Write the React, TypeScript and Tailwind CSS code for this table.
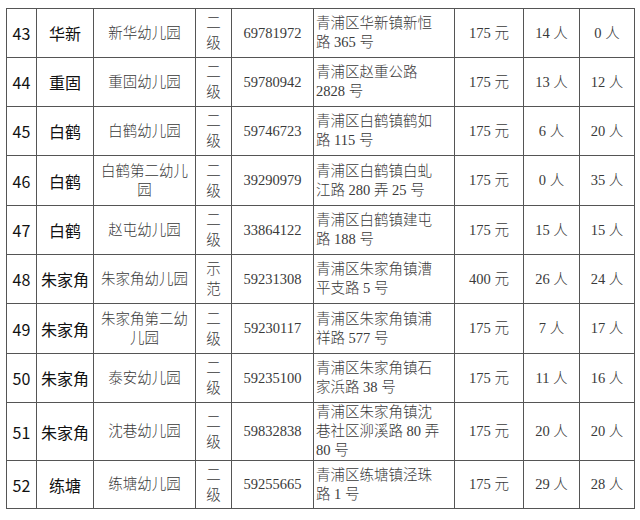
const rows = [
  { no: "43", town: "华新", name: "新华幼儿园", level: "二级", tel: "69781972", addr: "青浦区华新镇新恒路 365 号", fee: "175 元", a: "14 人", b: "0 人" },
  { no: "44", town: "重固", name: "重固幼儿园", level: "二级", tel: "59780942", addr: "青浦区赵重公路 2828 号", fee: "175 元", a: "13 人", b: "12 人" },
  { no: "45", town: "白鹤", name: "白鹤幼儿园", level: "二级", tel: "59746723", addr: "青浦区白鹤镇鹤如路 115 号", fee: "175 元", a: "6 人", b: "20 人" },
  { no: "46", town: "白鹤", name: "白鹤第二幼儿园", level: "二级", tel: "39290979", addr: "青浦区白鹤镇白虬江路 280 弄 25 号", fee: "175 元", a: "0 人", b: "35 人" },
  { no: "47", town: "白鹤", name: "赵屯幼儿园", level: "二级", tel: "33864122", addr: "青浦区白鹤镇建屯路 188 号", fee: "175 元", a: "15 人", b: "15 人" },
  { no: "48", town: "朱家角", name: "朱家角幼儿园", level: "示范", tel: "59231308", addr: "青浦区朱家角镇漕平支路 5 号", fee: "400 元", a: "26 人", b: "24 人" },
  { no: "49", town: "朱家角", name: "朱家角第二幼儿园", level: "二级", tel: "59230117", addr: "青浦区朱家角镇浦祥路 577 号", fee: "175 元", a: "7 人", b: "17 人" },
  { no: "50", town: "朱家角", name: "泰安幼儿园", level: "二级", tel: "59235100", addr: "青浦区朱家角镇石家浜路 38 号", fee: "175 元", a: "11 人", b: "16 人" },
  { no: "51", town: "朱家角", name: "沈巷幼儿园", level: "二级", tel: "59832838", addr: "青浦区朱家角镇沈巷社区泖溪路 80 弄 80 号", fee: "175 元", a: "20 人", b: "20 人" },
  { no: "52", town: "练塘", name: "练塘幼儿园", level: "二级", tel: "59255665", addr: "青浦区练塘镇泾珠路 1 号", fee: "175 元", a: "29 人", b: "28 人" },
];

const heights = ["h-[49px]", "h-[49px]", "h-[49px]", "h-[50px]", "h-[49px]", "h-[49px]", "h-[50px]", "h-[49px]", "h-[58px]", "h-[48px]"];

const sans = "font-['Noto_Sans_CJK_SC',sans-serif] text-[16px] text-[#111]";
const serif = "font-['Liberation_Serif','Noto_Sans_CJK_SC',serif] font-light text-[14.5px] leading-[19px] text-[#3a3a3a]";
const cell = "border border-[#555] p-0 align-middle";

export default function App() {
  return (
    <div className="w-[640px] h-[520px] bg-white pt-[8px] pl-[6px]">
      <table className="table-fixed border-collapse w-[628px]">
        <colgroup>
          <col className="w-[30px]" />
          <col className="w-[57px]" />
          <col className="w-[102px]" />
          <col className="w-[36px]" />
          <col className="w-[82px]" />
          <col className="w-[141px]" />
          <col className="w-[69px]" />
          <col className="w-[56px]" />
          <col className="w-[55px]" />
        </colgroup>
        <tbody>
          {rows.map((r, i) => (
            <tr key={r.no} className={heights[i]}>
              <td className={`${cell} ${sans} text-center`}>{r.no}</td>
              <td className={`${cell} ${sans} text-center`}>{r.town}</td>
              <td className={`${cell} ${serif} text-center px-[6px]`}>{r.name}</td>
              <td className={`${cell} ${serif} text-center !leading-[20px] px-[9px]`}>{r.level}</td>
              <td className={`${cell} ${serif} text-center`}>{r.tel}</td>
              <td className={`${cell} ${serif} text-left pl-[2px] pr-[14px]`}>{r.addr}</td>
              <td className={`${cell} ${serif} text-center`}>{r.fee}</td>
              <td className={`${cell} ${serif} text-center`}>{r.a}</td>
              <td className={`${cell} ${serif} text-center`}>{r.b}</td>
            </tr>
          ))}
        </tbody>
      </table>
    </div>
  );
}
